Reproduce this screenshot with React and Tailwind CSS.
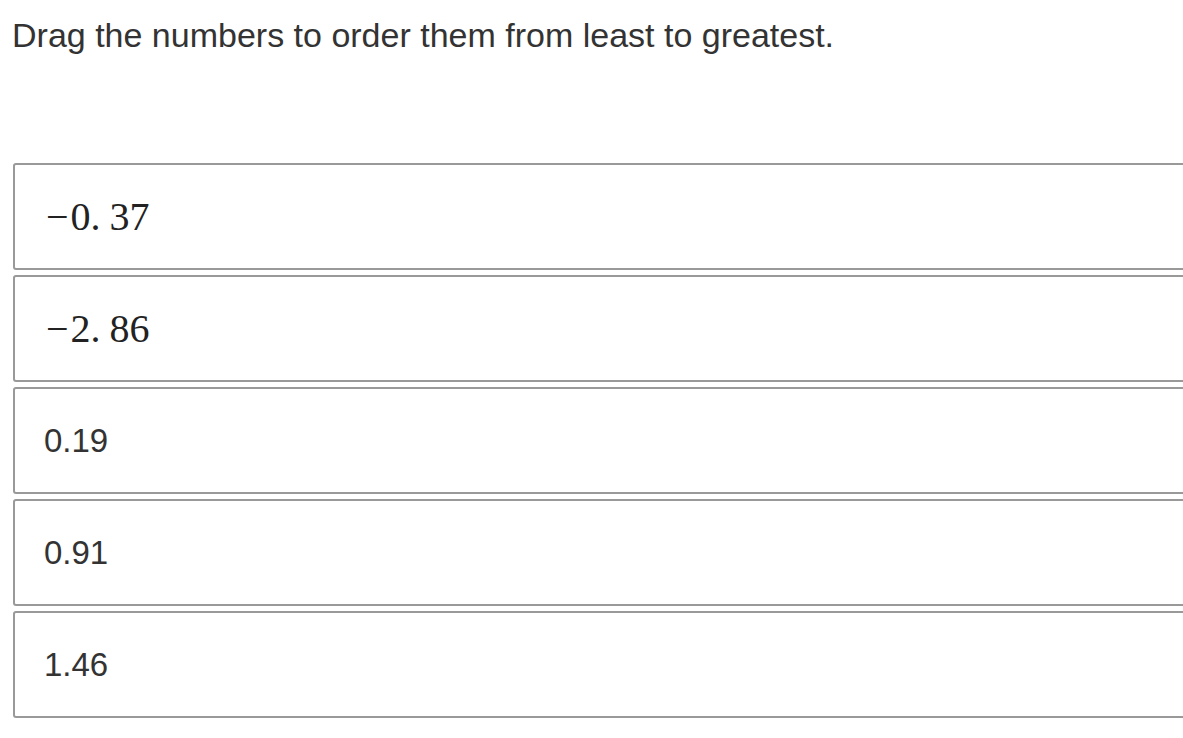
const items = [
  { math: true, sign: "−", whole: "0", frac: "37" },
  { math: true, sign: "−", whole: "2", frac: "86" },
  { text: "0.19" },
  { text: "0.91" },
  { text: "1.46" },
];

function MathNumber({ sign, whole, frac }) {
  return (
    <span className="font-['Liberation_Serif','DejaVu_Serif',serif] text-[40px] leading-none text-[#222]">
      <span className="ml-[2px] mr-[2px]">{sign}</span>
      <span>{whole}.</span>
      <span className="ml-[9px]">{frac}</span>
    </span>
  );
}

export default function App() {
  return (
    <div className="w-[1183px] h-[738px] overflow-hidden bg-white font-['Liberation_Sans',Arial,sans-serif] text-[#333]">
      <h1 className="pl-[12px] pt-[16px] text-[34px] leading-[39px] font-normal">
        Drag the numbers to order them from least to greatest.
      </h1>

      <ul className="mt-[108px] ml-[13px] w-[1220px] flex flex-col gap-[5px]">
        {items.map((item, i) => (
          <li
            key={i}
            className="h-[107px] border-2 border-[#999] rounded-[3px] bg-white flex items-center px-[29px]"
          >
            {item.math ? (
              <MathNumber sign={item.sign} whole={item.whole} frac={item.frac} />
            ) : (
              <span className="text-[33px] leading-none text-[#333]">{item.text}</span>
            )}
          </li>
        ))}
      </ul>
    </div>
  );
}
